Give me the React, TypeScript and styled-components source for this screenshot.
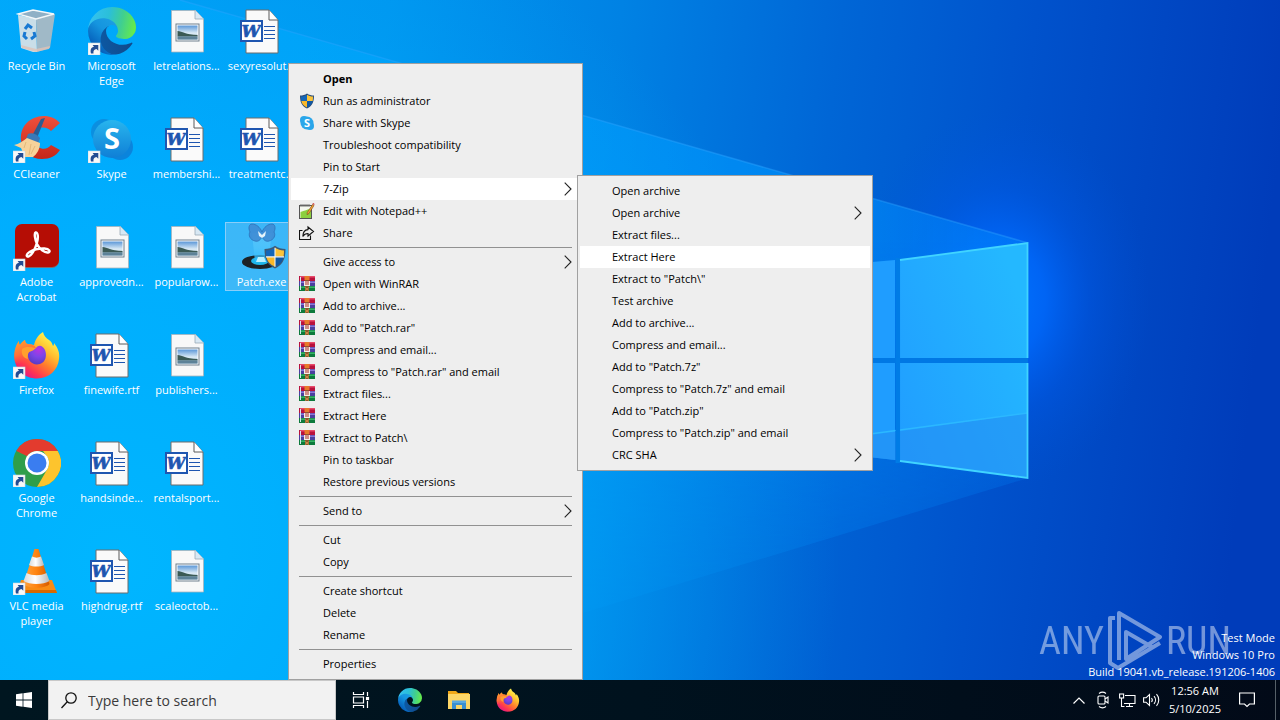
import React from "react";
import styled, { createGlobalStyle, css } from "styled-components";

const GlobalStyle = createGlobalStyle`
  * { box-sizing: border-box; }
  body { margin: 0; background: #0078d7; }
  button, input { font: inherit; color: inherit; border: 0; border-radius: 0; background: none; padding: 0; margin: 0; }
  button { cursor: default; }
  ul { list-style: none; margin: 0; padding: 0; }
  svg { display: block; flex: none; }
`;

const Screen = styled.div`
  position: relative;
  isolation: isolate;
  display: flex;
  flex-direction: column;
  min-height: 100vh;
  overflow: hidden;
  font-family: "Open Sans", "Noto Sans", sans-serif;
  font-size: 11px;
`;

const Wallpaper = styled.svg`
  position: absolute;
  inset: 0;
  width: 100%;
  height: 100%;
  z-index: -1;
`;

const SharedDefs = styled.svg`
  position: absolute;
`;

const Desktop = styled.main`
  position: relative;
  flex: 1;
  display: flex;
  justify-content: space-between;
  align-items: flex-start;
`;

const IconGrid = styled.div`
  display: grid;
  grid-auto-flow: column;
  grid-template-rows: repeat(6, 108px);
  grid-auto-columns: 75px;
  align-items: start;
  padding-top: 6px;
`;

const Shortcut = styled.button<{ $selected?: boolean }>`
  display: flex;
  flex-direction: column;
  align-items: center;
  gap: 3px;
  border: 1px solid transparent;
  padding: 0 2px 1px 0;
  color: #fff;
  line-height: 15px;
  text-align: center;
  ${(p) =>
    p.$selected &&
    css`
      background: rgba(150, 200, 240, 0.4);
      border-color: rgba(170, 215, 250, 0.7);
    `}
`;

const ShortcutLabel = styled.span`
  max-width: 75px;
`;

const BuildInfo = styled.div`
  align-self: flex-end;
  padding-right: 5px;
  color: #fff;
  line-height: 17px;
  text-align: right;
`;

const Brand = styled.div`
  position: absolute;
  right: 49px;
  bottom: 8px;
  display: flex;
  align-items: center;
  gap: 3px;
  color: #fff;
  opacity: 0.45;
  font-family: "Liberation Sans Narrow", "Roboto Condensed", "Liberation Sans", sans-serif;
  font-size: 38px;
  line-height: 40px;
`;

const menuPanel = css`
  position: absolute;
  padding: 4px 2px;
  background: #eeeeee;
  border: 1px solid #a0a0a0;
  color: #000;
`;

const ContextMenu = styled.ul`
  ${menuPanel}
  left: 288px;
  top: 63px;
  width: 295px;
`;

const SubMenu = styled.ul`
  ${menuPanel}
  left: calc(100% - 3px);
  top: -3px;
  width: 296px;
`;

const MenuRow = styled.li`
  position: relative;
`;

const MenuItem = styled.button<{ $active?: boolean; $bold?: boolean }>`
  display: flex;
  align-items: center;
  width: 100%;
  height: 22px;
  padding: 0 8px;
  text-align: left;
  line-height: 22px;
  white-space: nowrap;
  font-weight: ${(p) => (p.$bold ? 700 : 400)};
  background: ${(p) => (p.$active ? "#fff" : "transparent")};
`;

const MenuIcon = styled.span`
  width: 16px;
  margin-right: 8px;
`;

const MenuLabel = styled.span`
  flex: 1;
`;

const Separator = styled.li`
  height: 1px;
  margin: 3px 8px;
  background: #919191;
`;

const Taskbar = styled.footer`
  display: flex;
  align-items: stretch;
  height: 40px;
  color: #fff;
  background: linear-gradient(90deg, #001620, #00121e 50%, #020a18);
`;

const TaskButton = styled.button`
  display: grid;
  place-items: center;
  width: 49px;
  &:hover { background: rgba(255, 255, 255, 0.1); }
`;

const StartButton = styled(TaskButton)`
  width: 48px;
`;

const SearchBox = styled.label`
  display: flex;
  align-items: center;
  gap: 11px;
  width: 288px;
  padding-left: 12px;
  background: #f2f2f2;
  border: 1px solid #c8c8c8;
`;

const SearchInput = styled.input`
  flex: 1;
  min-width: 0;
  outline: none;
  font-size: 14px;
  color: #333;
  &::placeholder { color: #3a3a3a; opacity: 1; }
`;

const PinnedApps = styled.nav`
  display: flex;
`;

const Tray = styled.div`
  display: flex;
  margin-left: auto;
  padding-right: 4px;
`;

const TrayButton = styled(TaskButton)`
  width: 24px;
`;

const Clock = styled.button`
  width: 64px;
  line-height: 18px;
  text-align: center;
`;

const NotifyButton = styled(TaskButton)`
  width: 40px;
`;

const NotifyArea = styled.div`
  display: flex;
  width: 49px;
  border-right: 1px solid #566068;
`;

/* ---------- shared gradients ---------- */

const Gradients = () => (
  <SharedDefs width="0" height="0" aria-hidden="true">
    <defs>
      <linearGradient id="edgeDark" x1="60" y1="177" x2="240" y2="177" gradientUnits="userSpaceOnUse">
        <stop offset="0" stopColor="#0c59a4" />
        <stop offset="1" stopColor="#114a8b" />
      </linearGradient>
      <linearGradient id="edgeMid" x1="155" y1="100" x2="46" y2="220" gradientUnits="userSpaceOnUse">
        <stop offset="0" stopColor="#1b9de2" />
        <stop offset="0.4" stopColor="#1595df" />
        <stop offset="1" stopColor="#0560bb" />
      </linearGradient>
      <linearGradient id="edgeTop" x1="10" y1="60" x2="256" y2="110" gradientUnits="userSpaceOnUse">
        <stop offset="0" stopColor="#35c1f1" />
        <stop offset="0.4" stopColor="#2bbfd9" />
        <stop offset="0.7" stopColor="#40cf90" />
        <stop offset="1" stopColor="#66eb4a" />
      </linearGradient>
      <linearGradient id="ffBody" x1="0.8" y1="0.1" x2="0.2" y2="0.95">
        <stop offset="0" stopColor="#fff44f" />
        <stop offset="0.3" stopColor="#ffbd2f" />
        <stop offset="0.55" stopColor="#ff7a2e" />
        <stop offset="0.8" stopColor="#ff3750" />
        <stop offset="1" stopColor="#e31587" />
      </linearGradient>
      <linearGradient id="ffLeft" x1="0" y1="0" x2="0.4" y2="1">
        <stop offset="0" stopColor="#ffa52b" />
        <stop offset="0.6" stopColor="#ff7139" />
        <stop offset="1" stopColor="#ff4a45" stopOpacity="0" />
      </linearGradient>
      <radialGradient id="ffGlobe" cx="0.6" cy="0.2" r="0.8">
        <stop offset="0" stopColor="#b833e1" />
        <stop offset="0.5" stopColor="#7c45e8" />
        <stop offset="1" stopColor="#5a3bc4" />
      </radialGradient>
      <linearGradient id="skypeBlue" x1="0" y1="0" x2="0" y2="1">
        <stop offset="0" stopColor="#28b5ee" />
        <stop offset="1" stopColor="#0f7fd6" />
      </linearGradient>
      <linearGradient id="photoSky" x1="0" y1="0" x2="0" y2="1">
        <stop offset="0" stopColor="#5b97d8" />
        <stop offset="0.55" stopColor="#dcebf5" />
        <stop offset="1" stopColor="#8db2cc" />
      </linearGradient>
      <linearGradient id="cone" x1="0" y1="0" x2="1" y2="0">
        <stop offset="0" stopColor="#ffa340" />
        <stop offset="0.5" stopColor="#ff8410" />
        <stop offset="1" stopColor="#d45a00" />
      </linearGradient>
      <linearGradient id="coneWhite" x1="0" y1="0" x2="1" y2="0">
        <stop offset="0" stopColor="#d8d8d8" />
        <stop offset="0.45" stopColor="#ffffff" />
        <stop offset="1" stopColor="#b8b8b8" />
      </linearGradient>
      <linearGradient id="ccRed" x1="0" y1="0" x2="0" y2="1">
        <stop offset="0" stopColor="#f0503c" />
        <stop offset="1" stopColor="#c4261a" />
      </linearGradient>
      <linearGradient id="beam" x1="0" y1="1" x2="0" y2="0">
        <stop offset="0" stopColor="#21b8ff" stopOpacity="0.9" />
        <stop offset="1" stopColor="#8fe0ff" stopOpacity="0.15" />
      </linearGradient>
    </defs>
  </SharedDefs>
);

/* ---------- desktop icons, 48 x 48 ---------- */

const Arrow = () => (
  <g>
    <rect x="0" y="36" width="12" height="12" fill="#f8f8f8" stroke="#c9d6e0" strokeWidth="0.6" />
    <path d="M3 46.500C2 42.500 3.200 40.200 6 39.700L4.600 38H10.300V43.700L8.500 41.900C6 42.300 5 43.800 5.500 46.500z" fill="#234c93" />
  </g>
);

const Icon48 = ({ children, link }: { children: React.ReactNode; link?: boolean }) => (
  <svg width="48" height="48" viewBox="0 0 48 48" aria-hidden="true">
    {children}
    {link && <Arrow />}
  </svg>
);

const EdgeShape = () => (
  <>
    <g transform="translate(-4.630 -4.920)">
      <path fill="url(#edgeDark)" d="M235.680 195.460a93.730 93.730 0 0 1-10.540 4.710 101.870 101.870 0 0 1-35.900 6.460c-47.320 0-88.540-32.550-88.540-74.320A31.480 31.480 0 0 1 117.130 105c-42.800 1.800-53.800 46.400-53.800 72.530 0 73.880 68.090 81.370 82.760 81.370 7.910 0 19.840-2.300 27-4.560l1.310-.44a128.340 128.340 0 0 0 66.600-52.800 4 4 0 0 0-5.320-5.640z" />
      <path fill="url(#edgeMid)" d="M110.340 246.340A79.200 79.200 0 0 1 87.600 225a80.720 80.720 0 0 1 29.530-120c3.120-1.470 8.450-4.130 15.540-4a32.350 32.350 0 0 1 25.690 13 31.880 31.880 0 0 1 6.360 18.660c0-.21 24.460-79.600-80-79.600-43.900 0-80 41.660-80 78.210a130.150 130.150 0 0 0 12.110 56 128 128 0 0 0 156.380 67.110 75.550 75.550 0 0 1-62.780-8z" />
      <path fill="url(#edgeTop)" d="M156.940 153.780c-.81 1.050-3.300 2.500-3.300 5.660 0 2.610 1.700 5.120 4.720 7.230 14.380 10 41.490 8.680 41.560 8.680a59.560 59.560 0 0 0 30.270-8.350 61.380 61.380 0 0 0 30.430-52.880c.26-22.410-8-37.310-11.340-43.910C228.070 28.760 182.350 4.920 132.610 4.920a128 128 0 0 0-128 126.200c.48-36.540 36.800-66.050 80-66.050 3.500 0 23.460.34 42 10.070 16.340 8.580 24.900 18.940 30.850 29.210 6.180 10.670 7.280 24.150 7.280 29.520s-2.740 13.330-7.800 19.910z" />
    </g>
  </>
);

const FirefoxShape = () => (
  <>
    <path
      fill="url(#ffBody)"
      d="M30 1c1 4 3 6 6 8 2 1 3 3 4 6 1-1 1-2 1-3 4 5 6 10 5 16-1 11-10 19.500-22 19.500S2 39 1.500 27C1.500 20 3 14 6 10c0 2 0 3 1 4 1-2 3-4 5-5 0 2 1 4 3 4l6 1c1-5 4-10 9-13z"
    />
    <path fill="url(#ffLeft)" d="M6 10c0 2 0 3 1 4 1-2 3-4 5-5 0 2 1 4 3 4 4 0 6 1 8 4-3 0-4 2-7 3-3 2-3 8 0 12-5 0-9 2-14-1-2-8 0-16 4-21z" />
    <path fill="url(#ffGlobe)" d="M15 22c2-3 6-3 8-5 3-4 7-2 9 2 2 5 1 12-5 14-7 2-13-3-12-11z" />
    <path fill="#ffa02d" d="M9 18c4-3 9-2 13-1-1 3-4 3-6 4-1 2-2 4-1 7-5-1-7-5-6-10z" />
  </>
);

const ShieldShape = () => (
  <>
    <path d="M8 0.500C6 2 3.500 2.600 1 2.600c0 6 1.300 10.500 7 13 5.700-2.500 7-7 7-13C12.500 2.600 10 2 8 .5z" fill="#2a4d78" />
    <path d="M8 1.800V8H2.300C2.100 6.700 2 5.200 2 3.600 4.300 3.500 6.300 2.900 8 1.800z" fill="#1466b8" />
    <path d="M8 1.800V8h5.700c.2-1.300.3-2.800.3-4.400-2.300-.1-4.300-.7-6-1.800z" fill="#fbc33a" />
    <path d="M8 8v6.500C4.700 13 2.900 11 2.300 8z" fill="#f9b82a" />
    <path d="M8 8v6.500c3.300-1.500 5.100-3.500 5.700-6.500z" fill="#0f58a4" />
  </>
);

const PatchShield = () => (
  <g transform="translate(25 22) scale(1.500)">
    <path d="M8 0.500C6 2 3.500 2.600 1 2.600c0 6 1.300 10.500 7 13 5.700-2.500 7-7 7-13C12.500 2.600 10 2 8 .5z" fill="#3c5a78" />
    <path d="M8 1.800V7.700H2.300C2.100 6.700 2 5.200 2 3.600 4.300 3.500 6.300 2.900 8 1.800z" fill="#1466b8" />
    <path d="M8 1.800V7.700h5.700c.2-1.300.3-2.500.3-4.100-2.300-.1-4.300-.7-6-1.800z" fill="#fbc33a" />
    <path d="M8 8v6.500C4.700 13 2.900 11 2.300 8z" fill="#f9b82a" />
    <path d="M8 8v6.500c3.300-1.500 5.100-3.500 5.700-6.500z" fill="#0f58a4" />
    <path d="M8 1.800V14.500M2 7.900H14" stroke="#f3f6f8" strokeWidth="0.700" />
  </g>
);

const RecycleBin = () => (
  <Icon48>
    <path d="M5 8l18 4 1 33-4 0-12-4z" fill="#dfe3e6" fillOpacity="0.9" />
    <path d="M23 12l19-5-5 34-13 4z" fill="#a9b9c4" fillOpacity="0.95" />
    <path d="M5 7l15-4 21 4-18 5z" fill="#8fb0c6" stroke="#f4f7f9" strokeWidth="1.300" />
    <path d="M8 38l15 4 14-3-1 3-13 3-14-4z" fill="#dfc3b8" fillOpacity="0.8" />
    <g fill="none" stroke="#1979d2" strokeWidth="3">
      <path d="M12 22l3-4 4 3" />
      <path d="M21 25l1 4-4 3" />
      <path d="M14 32l-3-3 1-4" />
    </g>
  </Icon48>
);

const EdgeApp = () => (
  <Icon48 link>
    <g transform="scale(0.1875)"><EdgeShape /></g>
  </Icon48>
);

const CCleaner = () => (
  <Icon48 link>
    <path d="M47 8C41 1 30-1 21 3S7 15 8 25c1 12 10 19 21 19 8 0 14-3 18-9l-9-5c-3 4-8 5-13 2-7-4-7-14 0-18 5-3 10-1 13 2z" fill="url(#ccRed)" />
    <path d="M28 4l4-1-8 20-5-2z" fill="#2b5c92" />
    <path d="M15 19c3-2 9 0 12 4l-2 6-12-5z" fill="#3a79b8" />
    <path d="M1 30c5-1 9-4 13-7l13 5c0 6-3 11-7 14H12L8 33z" fill="#f6d29a" />
    <path d="M13 27l-2 6M18 29l-2 11M22 31l-4 8" stroke="#e4b878" strokeWidth="1" fill="none" />
  </Icon48>
);

const SkypeGlyph = styled.text`
  font-family: "Open Sans", sans-serif;
  font-weight: 700;
  fill: #fff;
  text-anchor: middle;
`;

const SkypeApp = () => (
  <Icon48 link>
    <circle cx="16" cy="17" r="13" fill="#0b8fe0" />
    <circle cx="32" cy="32" r="13" fill="#0b84dc" />
    <circle cx="24" cy="24" r="19" fill="url(#skypeBlue)" />
    <SkypeGlyph x="24" y="34" fontSize="29">S</SkypeGlyph>
  </Icon48>
);

const AcrobatApp = () => (
  <Icon48 link>
    <rect x="2" y="2" width="44" height="43" rx="7" fill="#7e6a70" />
    <rect x="2" y="1" width="44" height="43" rx="7" fill="#b50d05" />
    <path
      d="M22.500 9.500c2.500-.5 3 5 1.500 10-1.500 5.500-5 13-8.500 14-2.500.5-2.500-2.500 1-4.500 4-2.300 10-3.700 15-3.500 5 .2 6.500 3.500 3.500 4-3.500.5-8.500-3.500-11-8.500-2-4-3-11-1.500-11.500z"
      fill="none"
      stroke="#fff"
      strokeWidth="2.400"
    />
  </Icon48>
);

const FirefoxApp = () => (
  <Icon48 link><FirefoxShape /></Icon48>
);

const ChromeApp = () => (
  <Icon48 link>
    <circle cx="24" cy="24" r="24" fill="#2f9e4a" />
    <path d="M24 0A24 24 0 0 1 44.800 12H24a12 12 0 0 0-10.400 6L3.200 12A24 24 0 0 1 24 0z" fill="#e33b2e" />
    <path d="M3.200 12L13.600 30 16 18z" fill="#2f9e4a" />
    <path d="M44.800 12A24 24 0 0 1 24 48l10.400-18A12 12 0 0 0 34.400 18L30 12z" fill="#fdc42d" />
    <circle cx="24" cy="24" r="12" fill="#fff" />
    <circle cx="24" cy="24" r="9.500" fill="#3a7df0" />
  </Icon48>
);

const VlcApp = () => (
  <Icon48 link>
    <path d="M8 33h31l5 13H4z" fill="#f98b13" />
    <path d="M5 43h38l1 3H4z" fill="#d86800" />
    <path d="M21.500 2h4l11 35c-4 5-22 5-26 0z" fill="url(#cone)" />
    <path d="M19 9.500c3 1.500 6 1.500 9 0l3 8.500c-4 2-11 2-15 0z" fill="url(#coneWhite)" />
    <path d="M13.500 26c6 3 14 3 20 0l3 8c-6 4-20 4-26 0z" fill="url(#coneWhite)" />
  </Icon48>
);

const WordGlyph = styled.text`
  font-family: "DejaVu Serif", serif;
  font-weight: 700;
  font-style: italic;
  font-size: 17px;
  fill: #1f56b0;
  stroke: #1f56b0;
  stroke-width: 0.6px;
  text-anchor: middle;
`;

const WordDoc = () => (
  <Icon48>
    <path d="M8 3h23l9 10v33H8z" fill="#fafafa" stroke="#6d6d6d" strokeWidth="1" />
    <path d="M31 3v10h9" fill="#fff" stroke="#5a5a5a" strokeWidth="1" />
    <path d="M26 19.500h11M26 23.500h11M26 27.500h11M26 31.500h11" stroke="#1f56b0" strokeWidth="1.200" />
    <rect x="3" y="14" width="21" height="20" fill="#fff" stroke="#1f56b0" strokeWidth="2" />
    <WordGlyph x="13" y="30">W</WordGlyph>
  </Icon48>
);

const ImageDoc = () => (
  <Icon48>
    <path d="M8.500 3.500h24l8 8.500v33h-32z" fill="#f8f8f8" stroke="#a8b4bc" strokeWidth="0.800" />
    <path d="M32 3.500v8.500h8.500" fill="#d8e8f4" stroke="#9aaab6" strokeWidth="0.800" />
    <rect x="13" y="17" width="23" height="17" fill="#fff" stroke="#6f7f8c" />
    <rect x="14.500" y="18.500" width="20" height="14" fill="url(#photoSky)" />
    <path d="M14.500 24c5 .5 8 3.500 20 4v1.500h-20z" fill="#3b5a55" />
    <path d="M14.500 29.500h20v3h-20z" fill="#5d8298" />
  </Icon48>
);

const PatchApp = () => (
  <Icon48>
    <ellipse cx="22" cy="39" rx="18" ry="7" fill="#1d2226" />
    <ellipse cx="22" cy="38" rx="9" ry="4" fill="#1fb6ea" />
    <path d="M14 10h20l-4 29H17z" fill="url(#beam)" />
    <path d="M24 13c-1 4-4 6-7 5-5-1-7-6-5-9-2-4-1-8 2-8 4 0 8 3 10 8 2-5 6-8 10-8 3 0 4 4 2 8 2 3 0 8-5 9-3 1-6-1-7-5z" fill="#3f86d0" fillOpacity="0.8" stroke="#2d70b8" strokeWidth="0.800" />
    <path d="M20 8l4 4 4-4-1 5-3 2-3-2z" fill="#e5f4fb" />
    <path d="M20 34h6l2 5h-10z" fill="#b9f0ff" />
    <PatchShield />
  </Icon48>
);

/* ---------- menu icons, 16 x 16 ---------- */

const Icon16 = ({ children }: { children: React.ReactNode }) => (
  <svg width="16" height="16" viewBox="0 0 16 16" aria-hidden="true">{children}</svg>
);

const ShieldIcon = () => <Icon16><ShieldShape /></Icon16>;

const SkypeIcon = () => (
  <Icon16>
    <circle cx="5" cy="5" r="4" fill="#2aa6ea" />
    <circle cx="11" cy="11" r="4" fill="#2aa6ea" />
    <circle cx="8" cy="8" r="6.500" fill="#2aa6ea" />
    <SkypeGlyph x="8" y="12" fontSize="11">S</SkypeGlyph>
  </Icon16>
);

const NotepadIcon = () => (
  <Icon16>
    <rect x="0.500" y="2.500" width="12" height="13" fill="#f4f7ef" stroke="#555" />
    <path d="M2 1v3M4 1v3M6 1v3M8 1v3M10 1v3" stroke="#777" strokeWidth="1" />
    <path d="M1.500 9c4-1 7-3 10.500-3v9H1.500z" fill="#8ccf3f" />
    <path d="M13.500 1.500l1.500 1-5 8-2 1.200.3-2.200z" fill="#f0a030" stroke="#7a4a20" strokeWidth="0.600" />
    <path d="M13 1l2-1 .5 2z" fill="#c33" />
  </Icon16>
);

const ShareIcon = () => (
  <Icon16>
    <g fill="none" stroke="#111" strokeWidth="1.100">
      <path d="M3.500 5.500h-3v9h11v-4" />
      <path d="M9 2l5.500 4.500L9 11V8.500c-2.500 0-4 .8-5.200 3C3.900 7.500 5.600 4.800 9 4.600z" />
    </g>
  </Icon16>
);

const WinRarIcon = () => (
  <Icon16>
    <rect x="0" y="0" width="16" height="5" fill="#b8103c" />
    <rect x="1" y="0" width="15" height="1.500" fill="#e84a6a" />
    <rect x="0" y="5" width="16" height="5" fill="#4a3f9e" />
    <rect x="1" y="5.500" width="15" height="1.500" fill="#8a78d8" />
    <rect x="0" y="10" width="16" height="5" fill="#0d7a3c" />
    <rect x="1" y="10.500" width="15" height="1.500" fill="#35b265" />
    <rect x="1" y="1" width="1" height="13" fill="#d8e8ee" />
    <rect x="6" y="0" width="4" height="15" fill="#8c5a2e" />
    <rect x="5.500" y="0" width="5" height="4" fill="#e8792a" />
    <rect x="5" y="5" width="6" height="5" fill="#f2eee8" />
    <rect x="6.500" y="5" width="1" height="4" fill="#b02a20" />
    <rect x="8.500" y="5" width="1" height="4" fill="#b02a20" />
    <path d="M6 11.500l4 3M10 11.500l-4 3" stroke="#e0a050" strokeWidth="0.800" />
  </Icon16>
);

const Chevron = () => (
  <svg width="8" height="14" viewBox="0 0 8 14" aria-hidden="true">
    <path d="M0.700 0.700L7 7l-6.300 6.300" fill="none" stroke="#222" strokeWidth="1.100" />
  </svg>
);

/* ---------- data ---------- */

type Item = { label: string; Icon: React.ComponentType; selected?: boolean };

const desktopItems: Item[] = [
  { label: "Recycle Bin", Icon: RecycleBin },
  { label: "CCleaner", Icon: CCleaner },
  { label: "Adobe Acrobat", Icon: AcrobatApp },
  { label: "Firefox", Icon: FirefoxApp },
  { label: "Google Chrome", Icon: ChromeApp },
  { label: "VLC media player", Icon: VlcApp },
  { label: "Microsoft Edge", Icon: EdgeApp },
  { label: "Skype", Icon: SkypeApp },
  { label: "approvedn...", Icon: ImageDoc },
  { label: "finewife.rtf", Icon: WordDoc },
  { label: "handsinde...", Icon: WordDoc },
  { label: "highdrug.rtf", Icon: WordDoc },
  { label: "letrelations...", Icon: ImageDoc },
  { label: "membershi...", Icon: WordDoc },
  { label: "popularow...", Icon: ImageDoc },
  { label: "publishers...", Icon: ImageDoc },
  { label: "rentalsport...", Icon: WordDoc },
  { label: "scaleoctob...", Icon: ImageDoc },
  { label: "sexyresolut...", Icon: WordDoc },
  { label: "treatmentc...", Icon: WordDoc },
  { label: "Patch.exe", Icon: PatchApp, selected: true },
];

type Entry = {
  label: string;
  Icon?: React.ComponentType;
  bold?: boolean;
  active?: boolean;
  more?: boolean;
  children?: Entry[];
};

const sevenZip: Entry[] = [
  { label: "Open archive" },
  { label: "Open archive", more: true },
  { label: "Extract files..." },
  { label: "Extract Here", active: true },
  { label: 'Extract to "Patch\\"' },
  { label: "Test archive" },
  { label: "Add to archive..." },
  { label: "Compress and email..." },
  { label: 'Add to "Patch.7z"' },
  { label: 'Compress to "Patch.7z" and email' },
  { label: 'Add to "Patch.zip"' },
  { label: 'Compress to "Patch.zip" and email' },
  { label: "CRC SHA", more: true },
];

const groups: Entry[][] = [
  [
    { label: "Open", bold: true },
    { label: "Run as administrator", Icon: ShieldIcon },
    { label: "Share with Skype", Icon: SkypeIcon },
    { label: "Troubleshoot compatibility" },
    { label: "Pin to Start" },
    { label: "7-Zip", more: true, active: true, children: sevenZip },
    { label: "Edit with Notepad++", Icon: NotepadIcon },
    { label: "Share", Icon: ShareIcon },
  ],
  [
    { label: "Give access to", more: true },
    { label: "Open with WinRAR", Icon: WinRarIcon },
    { label: "Add to archive...", Icon: WinRarIcon },
    { label: 'Add to "Patch.rar"', Icon: WinRarIcon },
    { label: "Compress and email...", Icon: WinRarIcon },
    { label: 'Compress to "Patch.rar" and email', Icon: WinRarIcon },
    { label: "Extract files...", Icon: WinRarIcon },
    { label: "Extract Here", Icon: WinRarIcon },
    { label: "Extract to Patch\\", Icon: WinRarIcon },
    { label: "Pin to taskbar" },
    { label: "Restore previous versions" },
  ],
  [{ label: "Send to", more: true }],
  [{ label: "Cut" }, { label: "Copy" }],
  [{ label: "Create shortcut" }, { label: "Delete" }, { label: "Rename" }],
  [{ label: "Properties" }],
];

const MenuEntry = ({ entry }: { entry: Entry }) => (
  <MenuRow>
    <MenuItem $active={entry.active} $bold={entry.bold}>
      <MenuIcon>{entry.Icon && <entry.Icon />}</MenuIcon>
      <MenuLabel>{entry.label}</MenuLabel>
      {entry.more && <Chevron />}
    </MenuItem>
    {entry.children && (
      <SubMenu>
        {entry.children.map((e, i) => <MenuEntry key={i} entry={e} />)}
      </SubMenu>
    )}
  </MenuRow>
);

const WallpaperArt = () => (
  <Wallpaper viewBox="0 0 1280 720" preserveAspectRatio="xMidYMid slice" aria-hidden="true">
    <defs>
      <linearGradient id="wpBase" x1="0" y1="0" x2="1280" y2="150" gradientUnits="userSpaceOnUse">
        <stop offset="0" stopColor="#00a0f8" />
        <stop offset="0.300" stopColor="#0096f0" />
        <stop offset="0.480" stopColor="#0082e4" />
        <stop offset="0.650" stopColor="#0066d6" />
        <stop offset="0.800" stopColor="#0052cc" />
        <stop offset="1" stopColor="#003cba" />
      </linearGradient>
      <linearGradient id="wpBeam" x1="0" y1="0" x2="1028" y2="0" gradientUnits="userSpaceOnUse">
        <stop offset="0" stopColor="#00b0ff" />
        <stop offset="0.450" stopColor="#00a4ff" />
        <stop offset="0.800" stopColor="#0094ff" />
        <stop offset="1" stopColor="#0084fa" stopOpacity="0.800" />
      </linearGradient>
      <linearGradient id="wpFade" x1="0" y1="240" x2="0" y2="640" gradientUnits="userSpaceOnUse">
        <stop offset="0" stopColor="#fff" />
        <stop offset="1" stopColor="#fff" stopOpacity="0.150" />
      </linearGradient>
      <mask id="wpBeamMask" maskUnits="userSpaceOnUse" x="0" y="0" width="1280" height="720">
        <rect width="1280" height="720" fill="url(#wpFade)" />
      </mask>
      <radialGradient id="wpGlow" cx="0" cy="0" r="1" gradientUnits="userSpaceOnUse" gradientTransform="translate(1000 300) scale(150 190)">
        <stop offset="0" stopColor="#0074ff" />
        <stop offset="0.300" stopColor="#006aff" stopOpacity="0.800" />
        <stop offset="0.600" stopColor="#005cf0" stopOpacity="0.350" />
        <stop offset="1" stopColor="#0054d8" stopOpacity="0" />
      </radialGradient>
      <radialGradient id="wpCorner" cx="120" cy="560" r="720" gradientUnits="userSpaceOnUse">
        <stop offset="0" stopColor="#00b6ff" />
        <stop offset="0.500" stopColor="#00b0ff" stopOpacity="0.700" />
        <stop offset="1" stopColor="#00a0f0" stopOpacity="0" />
      </radialGradient>
      <linearGradient id="wpPane" x1="1" y1="0.300" x2="0" y2="1">
        <stop offset="0" stopColor="#24b8ff" />
        <stop offset="1" stopColor="#209cff" />
      </linearGradient>
    </defs>
    <rect width="1280" height="720" fill="url(#wpBase)" />
    <rect width="1280" height="720" fill="url(#wpGlow)" />
    <path d="M0 0H180L1028 243V478L0 790z" fill="url(#wpBeam)" fillOpacity="0.600" mask="url(#wpBeamMask)" />
    <rect width="1280" height="720" fill="url(#wpCorner)" />
    <path d="M180 0L1028 243" stroke="#2fa4ff" strokeOpacity="0.400" strokeWidth="1.500" />
    <path d="M780 270L895 260V460L780 447z" fill="#1f9dff" />
    <path d="M900 260L1028 243V478L900 461z" fill="url(#wpPane)" />
    <path d="M780 446L895 432 1028 413V478L895 460 780 447z" fill="#2590f4" fillOpacity="0.600" />
    <path d="M780 446L1028 413" stroke="#2cb8ff" strokeWidth="1.500" />
    <path d="M780 360.500H1028" stroke="#0078e4" strokeWidth="5" />
    <path d="M897.800 258V463" stroke="#007ce6" strokeWidth="4.500" />
    <path d="M900 260L1027.500 243V358M1027.500 363V478L900 461" fill="none" stroke="#40d4ff" strokeWidth="1.800" />
  </Wallpaper>
);

export default function App() {
  return (
    <Screen>
      <GlobalStyle />
      <Gradients />
      <WallpaperArt />
      <Desktop>
        <IconGrid>
          {desktopItems.map(({ label, Icon, selected }) => (
            <Shortcut key={label} $selected={selected}>
              <Icon />
              <ShortcutLabel>{label}</ShortcutLabel>
            </Shortcut>
          ))}
        </IconGrid>
        <Brand>
          <span>ANY</span>
          <svg width="56" height="62" viewBox="0 0 56 62" fill="none" stroke="#fff" strokeWidth="4" aria-hidden="true">
            <path d="M8 8H3v45l8 5 42-25M12 50V3l41 24-34 22V22l26 15" strokeLinejoin="round" />
          </svg>
          <span>RUN</span>
        </Brand>
        <BuildInfo>
          <div>Test Mode</div>
          <div>Windows 10 Pro</div>
          <div>Build 19041.vb_release.191206-1406</div>
        </BuildInfo>
        <ContextMenu>
          {groups.map((g, gi) => (
            <React.Fragment key={gi}>
              {gi > 0 && <Separator role="separator" />}
              {g.map((e) => <MenuEntry key={e.label} entry={e} />)}
            </React.Fragment>
          ))}
        </ContextMenu>
      </Desktop>
      <Taskbar>
        <StartButton aria-label="Start">
          <svg width="16" height="16" viewBox="0 0 16 16" fill="#fff">
            <path d="M0 2.200L6.600 1.300V7.600H0zM7.400 1.200L16 0V7.600H7.400zM0 8.400H6.600V14.700L0 13.800zM7.400 8.400H16V16L7.400 14.800z" />
          </svg>
        </StartButton>
        <SearchBox>
          <svg width="16" height="17" viewBox="0 0 16 17" fill="none" stroke="#111" strokeWidth="1.300" aria-hidden="true">
            <circle cx="10" cy="6" r="5.200" />
            <path d="M6.300 9.700L0.500 16" />
          </svg>
          <SearchInput type="text" aria-label="Search" placeholder="Type here to search" />
        </SearchBox>
        <PinnedApps>
          <TaskButton aria-label="Task View">
            <svg width="18" height="16" viewBox="0 0 18 16" fill="none" stroke="#fff" strokeWidth="1.200">
              <path d="M1.500 0v2.500h10V0M1.500 16v-2.500h10V16M1.500 5h10v6h-10z" />
              <path d="M15.500 0v4M15.500 9v7" />
              <rect x="14.500" y="5.500" width="2" height="2" fill="#fff" />
            </svg>
          </TaskButton>
          <TaskButton aria-label="Microsoft Edge">
            <svg width="24" height="24" viewBox="0 0 256 256"><EdgeShape /></svg>
          </TaskButton>
          <TaskButton aria-label="File Explorer">
            <svg width="22" height="20" viewBox="0 0 22 20">
              <path d="M0 1h8l2 2h11v16H0z" fill="#f0a818" />
              <path d="M0 4h22v15H0z" fill="#fcd667" />
              <path d="M4 11h14v8h-4v-4H8v4H4z" fill="#3b8fd0" />
              <path d="M4 10.500h14V13H4z" fill="#5aa9e0" />
            </svg>
          </TaskButton>
          <TaskButton aria-label="Firefox">
            <svg width="24" height="24" viewBox="0 0 48 48"><FirefoxShape /></svg>
          </TaskButton>
        </PinnedApps>
        <Tray>
          <TrayButton aria-label="Show hidden icons">
            <svg width="12" height="7" viewBox="0 0 12 7" fill="none" stroke="#fff" strokeWidth="1.200"><path d="M0.500 6.500L6 1l5.500 5.500" /></svg>
          </TrayButton>
          <TrayButton aria-label="Meet Now">
            <svg width="14" height="18" viewBox="0 0 14 18" fill="none" stroke="#fff" strokeWidth="1.100">
              <rect x="2" y="5" width="7" height="8" rx="1" />
              <path d="M9 8l3-2v6l-3-2M3 2.500c2-1.500 5-1.500 7 0M3 15.500c2 1.500 5 1.500 7 0" />
            </svg>
          </TrayButton>
          <TrayButton aria-label="Network">
            <svg width="17" height="15" viewBox="0 0 17 15" fill="none" stroke="#fff" strokeWidth="1.100">
              <path d="M6 2.500h10v8H5M10.500 10.500v3M7 13.500h7M2.500 5v8.500h3" />
              <rect x="0.600" y="1" width="4" height="4" />
            </svg>
          </TrayButton>
          <TrayButton aria-label="Volume">
            <svg width="17" height="14" viewBox="0 0 17 14" fill="none" stroke="#fff" strokeWidth="1.100">
              <path d="M0.600 4.800h2.400l3.500-3.300v11L3 9.200H.6zM8.500 5c1 1.200 1 2.800 0 4M11 3.200c2 2.200 2 5.400 0 7.600M13.500 1.200c3 3.300 3 8.300 0 11.600" />
            </svg>
          </TrayButton>
          <Clock>
            <div>12:56 AM</div>
            <div>5/10/2025</div>
          </Clock>
          <NotifyArea>
            <NotifyButton aria-label="Notifications">
              <svg width="16" height="16" viewBox="0 0 16 16" fill="none" stroke="#fff" strokeWidth="1.200"><path d="M0.600 1h14.800v11H10.500L8 14.500 5.500 12H.6z" /></svg>
            </NotifyButton>
          </NotifyArea>
        </Tray>
      </Taskbar>
    </Screen>
  );
}
